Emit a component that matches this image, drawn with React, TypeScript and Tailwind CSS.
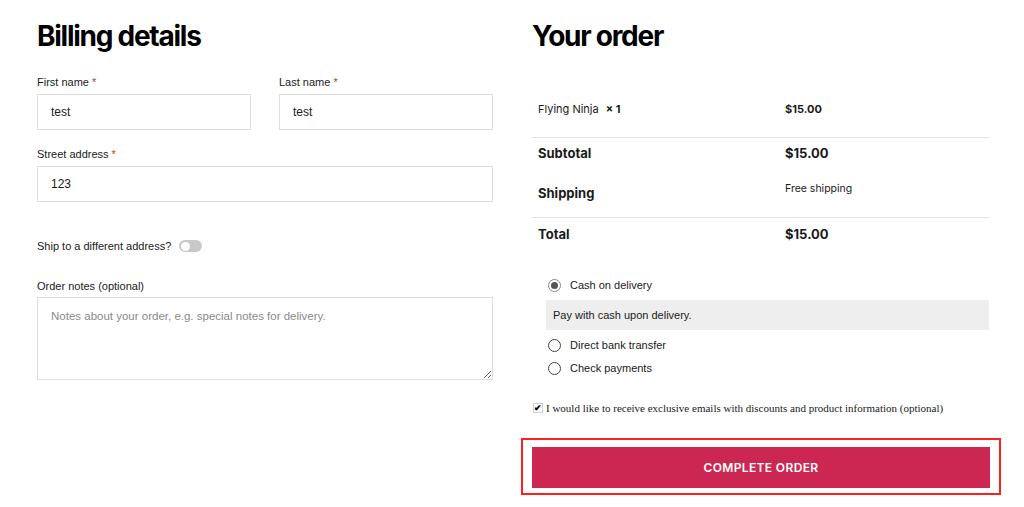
const INTER = 'font-["Inter",sans-serif]';
const SANS = 'font-["Liberation_Sans",Arial,sans-serif]';

function Label({ text, required }: { text: string; required?: boolean }) {
  return (
    <div className={`${SANS} text-[11px] leading-4 text-[#1a1a1a] h-4`}>
      {text}
      {required && <span className="text-[#c0392b]"> *</span>}
    </div>
  );
}

function Field({ value }: { value: string }) {
  return (
    <div
      className={`${SANS} mt-1 h-9 border border-[#dedede] px-[13px] flex items-center text-[12px] text-[#1a1a1a]`}
    >
      {value}
    </div>
  );
}

function Radio({ label, checked }: { label: string; checked?: boolean }) {
  return (
    <div className={`${SANS} flex items-center h-5 pl-[16px] text-[11px] text-[#1a1a1a]`}>
      <span
        className={`w-[13px] h-[13px] rounded-full border flex items-center justify-center ${
          checked ? 'border-[#8a8a8a]' : 'border-[#444]'
        }`}
      >
        {checked && <span className="w-[7px] h-[7px] rounded-full bg-[#555]" />}
      </span>
      <span className="ml-[9px]">{label}</span>
    </div>
  );
}

export default function App() {
  return (
    <div className="w-[1024px] h-[507px] bg-white overflow-hidden">
      <div className="flex gap-[39px] pl-[37px] pt-[18px]">
        {/* billing */}
        <div className="w-[456px]">
          <h1 className={`${INTER} text-[28px] leading-9 font-bold tracking-[-0.045em] text-black`}>
            Billing details
          </h1>
          <div className="mt-5 flex gap-[28px]">
            <div className="flex-1">
              <Label text="First name" required />
              <Field value="test" />
            </div>
            <div className="flex-1">
              <Label text="Last name" required />
              <Field value="test" />
            </div>
          </div>
          <div className="mt-4">
            <Label text="Street address" required />
            <Field value="123" />
          </div>
          <div className={`${SANS} mt-[36px] flex items-center h-4 text-[11px] text-[#1a1a1a]`}>
            Ship to a different address?
            <span className="ml-[8px] w-[23px] h-[12px] rounded-full bg-[#c8c8c8] flex items-center pl-[2px]">
              <span className="w-[9px] h-[9px] rounded-full bg-white" />
            </span>
          </div>
          <div className="mt-[24px]">
            <Label text="Order notes (optional)" />
            <textarea
              className={`${SANS} mt-[3px] block w-full h-[83px] border border-[#dedede] px-[13px] py-[10px] text-[11.5px] placeholder:text-[#8a8a8a] outline-none`}
              placeholder="Notes about your order, e.g. special notes for delivery."
            />
          </div>
        </div>

        {/* order */}
        <div className="w-[457px]">
          <h2 className={`${INTER} text-[28px] leading-9 font-bold tracking-[-0.045em] text-black`}>
            Your order
          </h2>
          <div className={`${INTER} mt-[26px] text-[11px] text-[#1a1a1a]`}>
            <div className="grid grid-cols-[253px_1fr] h-[58px] items-center border-b border-[#e4e4e4] pt-[1px]">
              <div className="pl-[6px]">
                Flying Ninja <span className="font-bold ml-1">× 1</span>
              </div>
              <div className="font-bold">$15.00</div>
            </div>
            <div className="grid grid-cols-[253px_1fr] pt-[6px] h-[36px]">
              <div className="pl-[6px] font-bold text-[13px]">Subtotal</div>
              <div className="font-bold text-[13px]">$15.00</div>
            </div>
            <div className="grid grid-cols-[253px_1fr] h-[44px] border-b border-[#e4e4e4]">
              <div className="pl-[6px] font-bold text-[13px] pt-[10px]">Shipping</div>
              <div className="pt-[7px] text-[10.5px]">Free shipping</div>
            </div>
            <div className="grid grid-cols-[253px_1fr] pt-[7px] h-[44px]">
              <div className="pl-[6px] font-bold text-[13px]">Total</div>
              <div className="font-bold text-[13px]">$15.00</div>
            </div>
          </div>
          <div className="mt-[13px]">
            <Radio label="Cash on delivery" checked />
            <div className={`${SANS} mt-[5px] ml-[14px] h-[30px] bg-[#eeeeee] flex items-center pl-[7px] text-[11px] text-[#1a1a1a]`}>
              Pay with cash upon delivery.
            </div>
            <div className="mt-[5px]">
              <Radio label="Direct bank transfer" />
            </div>
            <div className="mt-[3px]">
              <Radio label="Check payments" />
            </div>
          </div>
          <div className={`font-["Liberation_Serif","Times_New_Roman",serif] mt-[22px] flex items-center h-4 text-[11px] text-[#1a1a1a] pl-[1px]`}>
            <span className="w-[10px] h-[10px] border border-[#d0d0d0] flex items-center justify-center text-[9px] leading-none text-black font-bold">
              ✔
            </span>
            <span className="ml-[3px]">
              I would like to receive exclusive emails with discounts and product information (optional)
            </span>
          </div>
          <div className="mt-[22px] -mx-[11px] border-2 border-[#ff1f1f] px-[9px] pt-[7px] pb-[5px] w-[480px]">
            <button
              type="button"
              className={`${INTER} w-full h-[41px] bg-[#cc2752] text-white text-[12px] font-semibold tracking-[0.03em] uppercase`}
            >
              Complete order
            </button>
          </div>
        </div>
      </div>
    </div>
  );
}
